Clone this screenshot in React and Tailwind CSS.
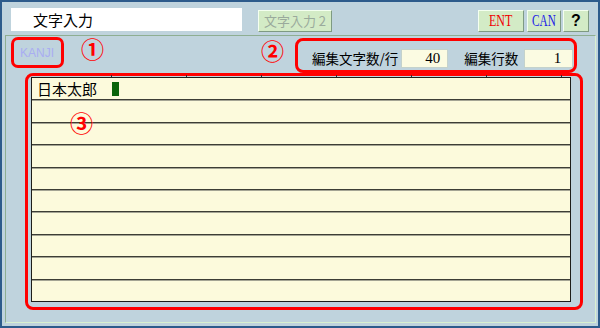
import React from "react";

const jp = "font-['Noto_Sans_CJK_JP',sans-serif]";
const serif = "font-['Liberation_Serif','Noto_Sans_CJK_JP',serif]";

function Btn({ className = "", children }) {
  return (
    <div
      className={
        "mt-[8px] h-[22px] flex items-center justify-center bg-[#d3ebc6] border border-t-[#f4fff0] border-l-[#f4fff0] border-b-[#7e9a82] border-r-[#7e9a82] " +
        className
      }
    >
      {children}
    </div>
  );
}

export default function App() {
  const ticks = [79, 154, 229, 304, 379, 454, 529];
  const rows = Array.from({ length: 10 });
  return (
    <div className={"w-[600px] h-[328px] border-2 border-[#2d5b8b] bg-[#bfd3dd] flex flex-col " + jp}>
      {/* top bar */}
      <div className="h-[33px] flex items-start pl-[9px] pr-[9px]">
        <div className="mt-[6px] w-[231px] h-[23px] bg-white flex items-center pl-[22px] text-[15px] leading-none text-black">
          文字入力
        </div>
        <Btn className="ml-[16px] w-[74px] text-[13px] text-[#9aaa9c]">文字入力 2</Btn>
        <div className="flex-1" />
        <Btn className="w-[46px]">
          <span className={"inline-block scale-x-75 text-[16px] leading-none text-[#f00000] " + serif}>ENT</span>
        </Btn>
        <Btn className="ml-[3px] w-[34px]">
          <span className={"inline-block scale-x-[0.7] text-[16px] leading-none text-[#1a1ae6] " + serif}>CAN</span>
        </Btn>
        <Btn className="ml-[2px] w-[26px]">
          <span className="font-['Liberation_Sans',sans-serif] font-bold text-[16px] leading-none text-black">?</span>
        </Btn>
      </div>

      {/* panel */}
      <div className="ml-[3px] mr-[2px] mb-[3px] flex-1 flex flex-col border border-t-[#8eae92] border-l-[#8eae92] border-b-[#d8f0d0] border-r-[#d8f0d0]">
        {/* row 1 */}
        <div className="h-[37px] flex items-start">
          <div className="ml-[5px] mt-[1px] w-[53px] h-[31px] border-[3px] border-[#ff0000] rounded-[7px] flex items-center pl-[6px] font-['Liberation_Sans',sans-serif] text-[12px] text-[#a9adf2]">
            KANJI
          </div>
          <span className="ml-[17px] mt-[1px] text-[23px] leading-none font-bold text-[#ff0000]">①</span>
          <div className="flex-1" />
          <span className="mt-[3px] mr-[11px] text-[23px] leading-none font-bold text-[#ff0000]">②</span>
          <div className="mr-[18px] mt-[2px] w-[282px] h-[35px] border-[3px] border-[#ff0000] rounded-[8px] flex items-end pb-[2px] pl-[14px] text-[13.5px] text-black">
            <span className="h-[19px] leading-[19px]">編集文字数/行</span>
            <div className={"ml-[3px] w-[47px] h-[19px] bg-[#fbfbe2] border border-[#c4d2cc] flex items-center justify-end pr-[7px] text-[15px] leading-none " + serif}>
              40
            </div>
            <span className="ml-[16px] h-[19px] leading-[19px]">編集行数</span>
            <div className={"ml-[6px] w-[49px] h-[19px] bg-[#fbfbe2] border border-[#c4d2cc] flex items-center justify-end pr-[11px] text-[15px] leading-none " + serif}>
              1
            </div>
          </div>
        </div>

        {/* row 2 */}
        <div className="relative ml-[19px] w-[558px] h-[237px] border-[3px] border-[#ff0000] rounded-[8px] pl-[3px] pt-[1px] pr-[9px] pb-[5px]">
          <div className="relative w-[540px] h-[225px] bg-[#fcfadc] border border-[#1e1e1a] flex flex-col">
            {ticks.map((x) => (
              <div key={x} className="absolute top-[-3px] w-[1px] h-[2px] bg-[#303030]" style={{ left: x }} />
            ))}
            {rows.map((_, i) => (
              <div
                key={i}
                className={
                  "flex-1 flex items-center " +
                  (i < rows.length - 1 ? "border-b border-[#3d3d35] shadow-[0_1px_0_#a4a494]" : "")
                }
              >
                {i === 0 && (
                  <div className="flex items-center pl-[5px]">
                    <span className="text-[15px] leading-none text-black">日本太郎</span>
                    <span className="ml-[15px] w-[7px] h-[14px] bg-[#0a640a]" />
                  </div>
                )}
              </div>
            ))}
          </div>
          <span className="absolute left-[42px] top-[35px] text-[23px] leading-none font-bold text-[#ff0000]">③</span>
        </div>
      </div>
    </div>
  );
}
